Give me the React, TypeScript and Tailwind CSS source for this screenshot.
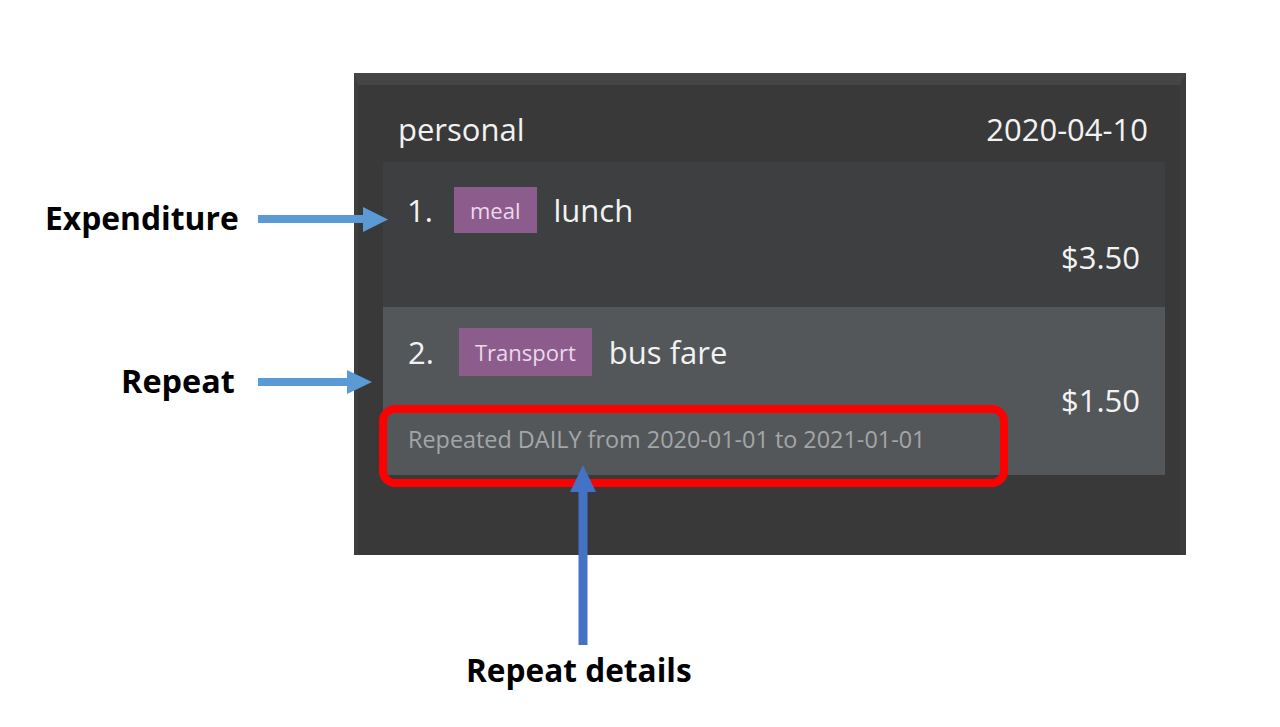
import React from "react";

const font = { fontFamily: '"Open Sans", "Noto Sans", sans-serif' };

function Tag({ label }: { label: string }) {
  return (
    <div className="flex items-center bg-[#8c5d8c] text-[#ecd8ec] text-[22px] leading-[30px] px-[16px] self-stretch">
      {label}
    </div>
  );
}

export default function App() {
  return (
    <div
      className="relative w-[1280px] h-[727px] bg-white overflow-hidden"
      style={font}
    >
      {/* Panel */}
      <div className="pt-[73px] pl-[354px]">
        <div className="w-[832px] h-[482px] bg-[#393939] border-t-[12px] border-t-[#454545] border-l-[4px] border-l-[#3e3e3e] border-r-[6px] border-r-[#3c3c3c] pl-[25px] pr-[15px] pt-[23px] text-[#f2f2f2]">
          <div className="flex justify-between items-center text-[31px] leading-[42px] pl-[15px] pr-[17px] mb-[12px]">
            <span>personal</span>
            <span>2020-04-10</span>
          </div>

          {/* Card 1 */}
          <div className="bg-[#3d3f41] pl-[24px] pr-[25px] pt-[25px] pb-[29px]">
            <div className="flex items-center h-[46px] text-[31px] leading-[42px]">
              <span className="w-[47px]">1.</span>
              <Tag label="meal" />
              <span className="ml-[17px]">lunch</span>
            </div>
            <div className="mt-[3px] text-right text-[31px] leading-[42px]">$3.50</div>
          </div>

          {/* Card 2 */}
          <div className="bg-[#53575a] pl-[25px] pr-[25px] pt-[21px] pb-[20px]">
            <div className="flex items-center h-[48px] text-[31px] leading-[42px]">
              <span className="w-[51px]">2.</span>
              <Tag label="Transport" />
              <span className="ml-[17px]">bus fare</span>
            </div>
            <div className="mt-[3px] text-right text-[31px] leading-[42px]">$1.50</div>
            <div className="mt-[2px] text-[23.4px] leading-[32px] text-[#a3a6a8]">
              Repeated DAILY from 2020-01-01 to 2021-01-01
            </div>
          </div>
        </div>
      </div>

      {/* Red highlight box */}
      <div className="absolute left-[379px] top-[405px] w-[629px] h-[82px] border-[8px] border-[#ff0000] rounded-[16px]" />

      {/* Arrows */}
      <svg
        className="absolute left-0 top-0"
        width="1280"
        height="727"
        viewBox="0 0 1280 727"
      >
        <rect x="258" y="215" width="106" height="8" fill="#5b9bd5" />
        <polygon points="363,207 388,219.5 363,232" fill="#5b9bd5" />
        <rect x="258" y="378" width="90" height="8" fill="#5b9bd5" />
        <polygon points="347,370 372,382 347,394" fill="#5b9bd5" />
        <rect x="578.5" y="491" width="9" height="154" fill="#4472c4" />
        <polygon points="570,492 583,465 596,492" fill="#4472c4" />
      </svg>

      {/* Labels */}
      <div className="absolute left-[45px] top-[202px] text-[31.8px] leading-[32px] font-bold text-black">
        Expenditure
      </div>
      <div className="absolute left-[121px] top-[364px] text-[32.4px] leading-[32px] font-bold text-black">
        Repeat
      </div>
      <div className="absolute left-[466px] top-[654px] text-[31.6px] leading-[32px] font-bold text-black">
        Repeat details
      </div>
    </div>
  );
}
